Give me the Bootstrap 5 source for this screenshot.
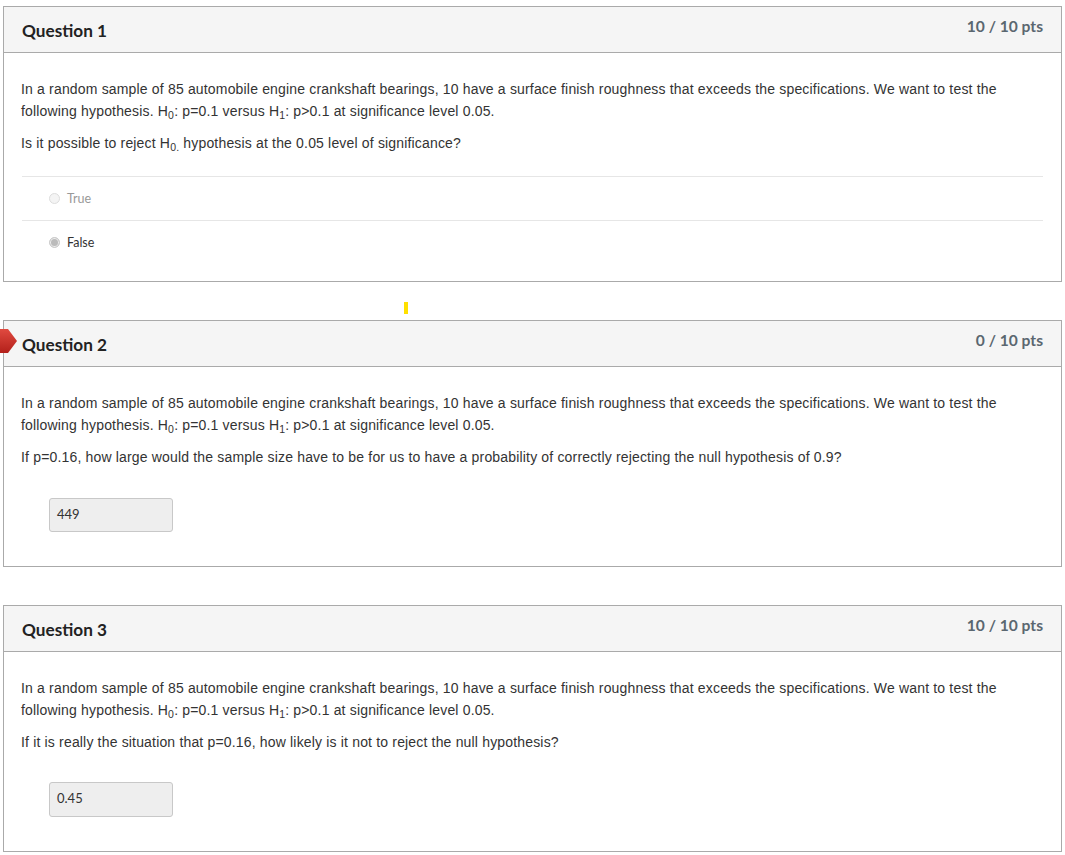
<!DOCTYPE html>
<html lang="en">
<head>
    <meta charset="UTF-8">
    <meta name="viewport" content="width=device-width, initial-scale=1.0">
    <title>Quiz Results</title>
    <link href="https://cdn.jsdelivr.net/npm/bootstrap@5.3.2/dist/css/bootstrap.min.css" rel="stylesheet">
    <style>
        body { background: #fff; }
        .quiz-page { padding: 6px 3px 0 3px; width: 1065px; }
        .quiz-box { border: 1px solid #aaa; border-radius: 0; margin-bottom: 38px; position: relative; }
        .quiz-head { background: #f5f5f5; border-bottom: 1px solid #aaa; height: 46px; padding: 0 18px; font-family: Lato, sans-serif; }
        .quiz-title { font-size: 17.2px; font-weight: 700; line-height: 47px; margin: 0; color: #222; }
        .quiz-pts { font-size: 15.6px; font-weight: 700; color: #5b6770; line-height: 38px; }
        .quiz-body { padding: 25px 18px 0 17px; height: 228px; }
        .quiz-body.short { height: 199px; }
        .quiz-text { font-family: "Liberation Sans", Arial, sans-serif; font-size: 14px; letter-spacing: 0.17px; line-height: 22px; color: #333; margin: 0 0 10px 0; max-width: 990px; }
        .quiz-text sub { font-size: 10.5px; bottom: -0.25em; line-height: 0; }
        .answer-row { border-top: 1px solid #e6e6e6; height: 44px; padding: 2px 0 0 27px; font-family: Lato, sans-serif; font-size: 12.5px; color: #333; }
        .answer-row.off { color: #999; }
        .answer-list { margin: 22px 0 0 1px; }
        .fake-radio { width: 11px; height: 11px; border-radius: 50%; border: 1px solid #ddd; background: #f4f4f4; margin-right: 7px; margin-top: -3px; }
        .fake-radio.on { background: #bbb; border: 1px solid #ccc; box-shadow: inset 0 0 0 1px #eee; }
        .answer-box { margin: 30px 0 0 28px; width: 124px; height: 34px; background: #eee; border: 1px solid #c8c8c8; border-radius: 3px; padding: 0 7px; line-height: 30px; font-family: Lato, sans-serif; font-size: 13px; color: #333; }
        .answer-box.tall-box { margin-top: 29px; height: 35px; line-height: 31px; }
        .wrong-flag { position: absolute; left: -4px; top: 8px; width: 17px; height: 24px; }
        .yellow-mark { position: absolute; left: 400px; top: -19px; width: 4px; height: 12px; background: #ffe000; }
    </style>
</head>
<body>
<div class="quiz-page">

    <div class="quiz-box">
        <div class="quiz-head d-flex justify-content-between">
            <h2 class="quiz-title">Question 1</h2>
            <div class="quiz-pts">10 / 10 pts</div>
        </div>
        <div class="quiz-body">
            <p class="quiz-text">In a random sample of 85 automobile engine crankshaft bearings, 10 have a surface finish roughness that exceeds the specifications. We want to test the following hypothesis. H<sub>0</sub>: p=0.1 versus H<sub>1</sub>: p&gt;0.1 at significance level 0.05.</p>
            <p class="quiz-text">Is it possible to reject H<sub>0.</sub> hypothesis at the 0.05 level of significance?</p>
            <div class="answer-list">
                <div class="answer-row off d-flex align-items-center"><span class="fake-radio"></span>True</div>
                <div class="answer-row d-flex align-items-center"><span class="fake-radio on"></span>False</div>
            </div>
        </div>
    </div>

    <div class="quiz-box">
        <div class="yellow-mark"></div>
        <svg class="wrong-flag" viewBox="0 0 17 24">
            <defs><linearGradient id="flagFill" x1="0" y1="0" x2="0" y2="1"><stop offset="0" stop-color="#e04a40"/><stop offset="1" stop-color="#b3201a"/></linearGradient></defs>
            <path d="M0 0H8L17 12L8 24H0Z" fill="url(#flagFill)"/>
        </svg>
        <div class="quiz-head d-flex justify-content-between">
            <h2 class="quiz-title">Question 2</h2>
            <div class="quiz-pts">0 / 10 pts</div>
        </div>
        <div class="quiz-body short">
            <p class="quiz-text">In a random sample of 85 automobile engine crankshaft bearings, 10 have a surface finish roughness that exceeds the specifications. We want to test the following hypothesis. H<sub>0</sub>: p=0.1 versus H<sub>1</sub>: p&gt;0.1 at significance level 0.05.</p>
            <p class="quiz-text">If p=0.16, how large would the sample size have to be for us to have a probability of correctly rejecting the null hypothesis of 0.9?</p>
            <div class="answer-box">449</div>
        </div>
    </div>

    <div class="quiz-box">
        <div class="quiz-head d-flex justify-content-between">
            <h2 class="quiz-title">Question 3</h2>
            <div class="quiz-pts">10 / 10 pts</div>
        </div>
        <div class="quiz-body short">
            <p class="quiz-text">In a random sample of 85 automobile engine crankshaft bearings, 10 have a surface finish roughness that exceeds the specifications. We want to test the following hypothesis. H<sub>0</sub>: p=0.1 versus H<sub>1</sub>: p&gt;0.1 at significance level 0.05.</p>
            <p class="quiz-text">If it is really the situation that p=0.16, how likely is it not to reject the null hypothesis?</p>
            <div class="answer-box tall-box">0.45</div>
        </div>
    </div>

</div>
<script src="https://cdn.jsdelivr.net/npm/bootstrap@5.3.2/dist/js/bootstrap.bundle.min.js"></script>
</body>
</html>
